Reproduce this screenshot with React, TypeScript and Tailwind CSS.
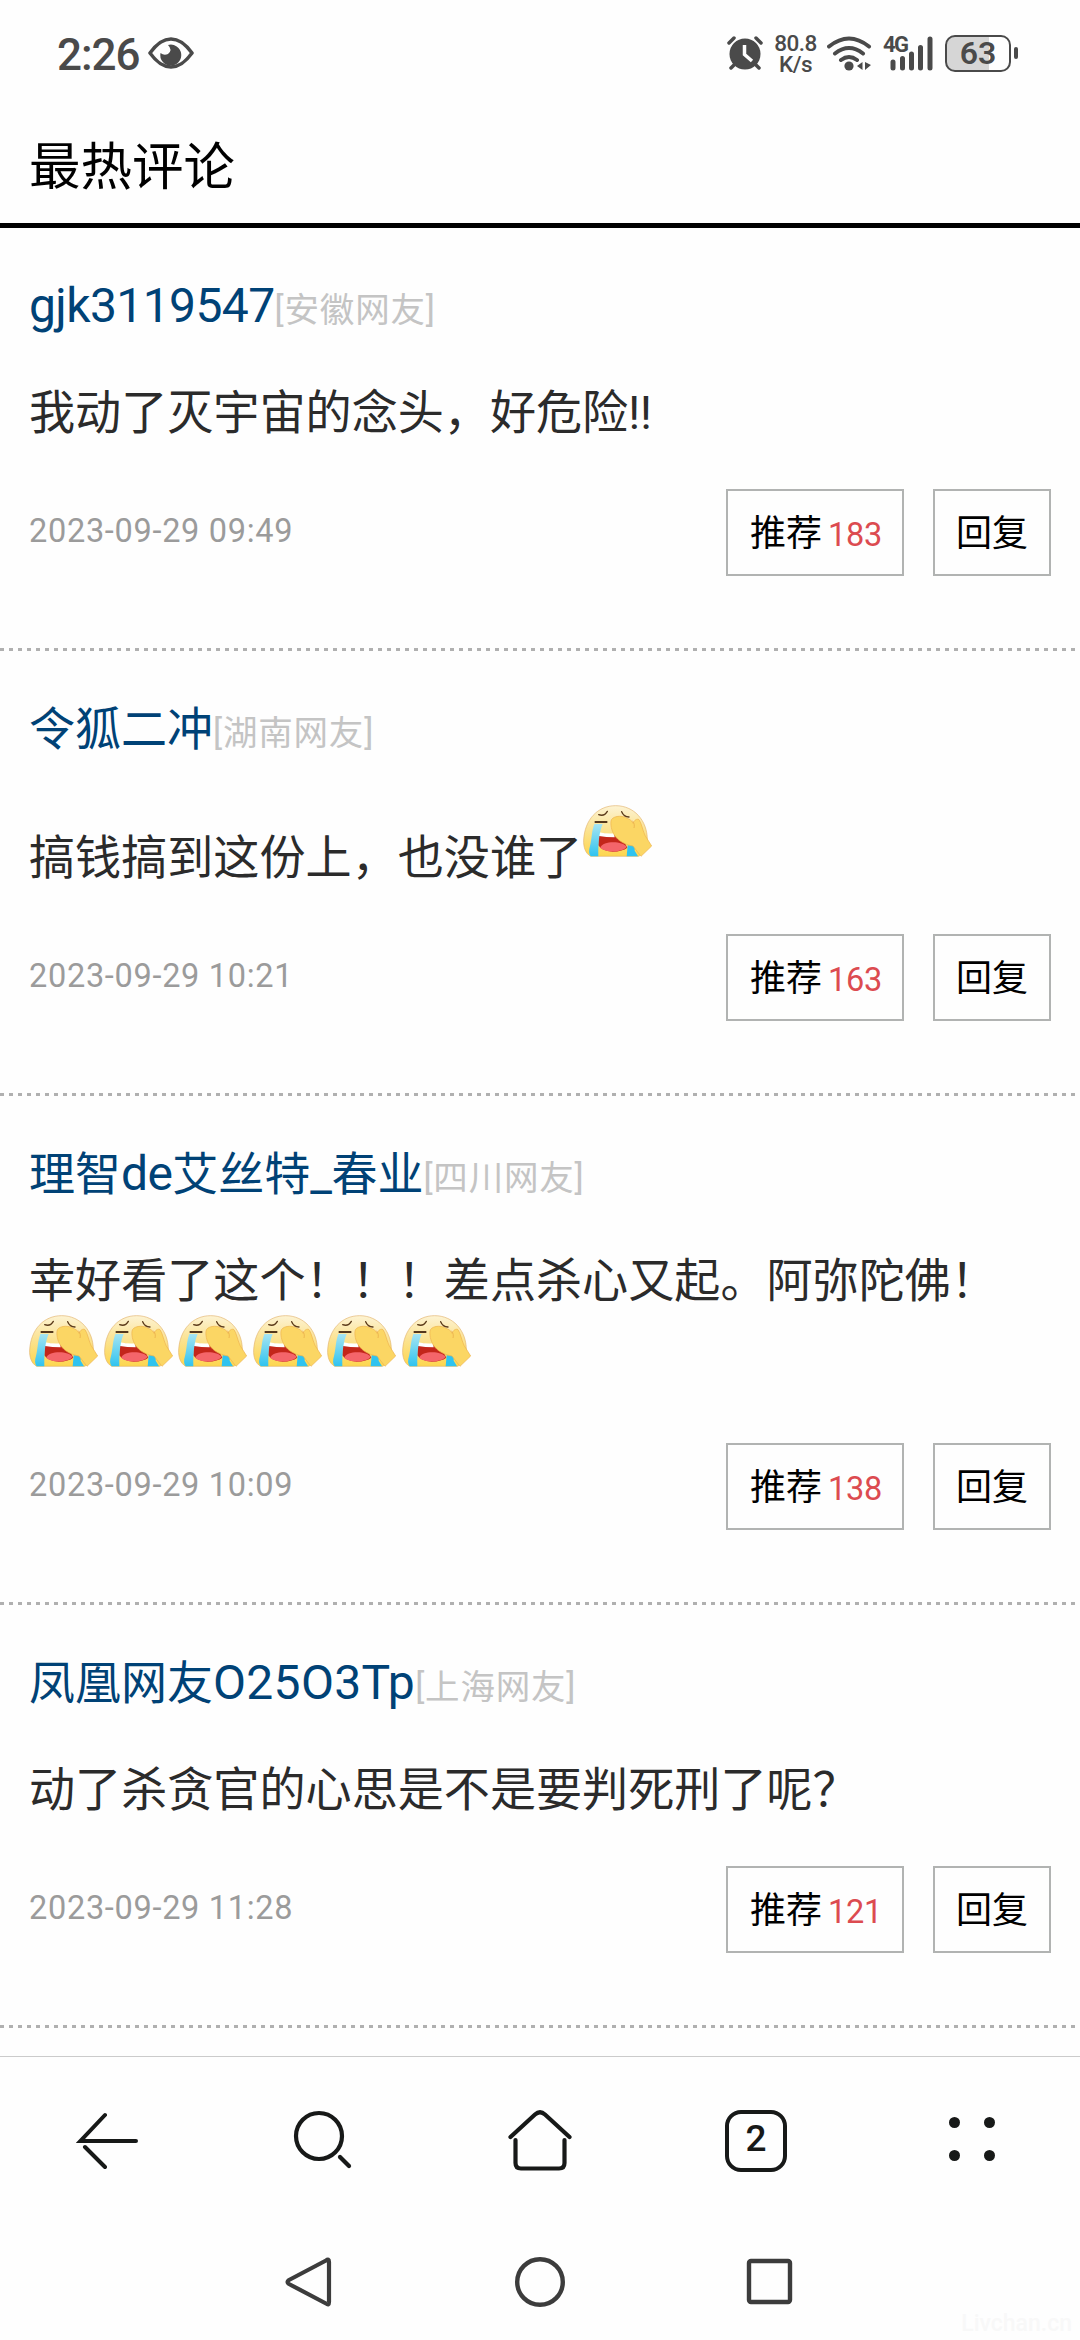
interface Comment {
  name: string
  region: string
  text: string
  time: string
  likes: number
  inlineFaces?: number
  rowFaces?: number
}

const comments: Comment[] = [
  { name: 'gjk3119547', region: '安徽网友', text: '我动了灭宇宙的念头，好危险!!', time: '2023-09-29 09:49', likes: 183 },
  { name: '令狐二冲', region: '湖南网友', text: '搞钱搞到这份上，也没谁了', time: '2023-09-29 10:21', likes: 163, inlineFaces: 1 },
  { name: '理智de艾丝特_春业', region: '四川网友', text: '幸好看了这个！！！差点杀心又起。阿弥陀佛！', time: '2023-09-29 10:09', likes: 138, rowFaces: 6 },
  { name: '凤凰网友O25O3Tp', region: '上海网友', text: '动了杀贪官的心思是不是要判死刑了呢？', time: '2023-09-29 11:28', likes: 121 },
]

function Face() {
  return (
    <svg className="block h-[54px] w-[71px] shrink-0" viewBox="62 74 213 162">
      <defs>
        <linearGradient id="skin" x1="0" y1="0" x2="0" y2="1">
          <stop offset="0" stopColor="#fdf3d3" />
          <stop offset="0.45" stopColor="#fbe394" />
          <stop offset="1" stopColor="#fdd64e" />
        </linearGradient>
        <linearGradient id="tear" x1="0" y1="0" x2="0" y2="1">
          <stop offset="0" stopColor="#a5e4f2" />
          <stop offset="1" stopColor="#2fc3ef" />
        </linearGradient>
      </defs>
      <path d="M88 231C72 222 66 203 67 182C70 122 108 79 163 79C217 79 258 122 258 182C258 204 248 222 232 231Z" fill="url(#skin)" stroke="#e3b36b" strokeWidth="2" />
      <path d="M112 160Q152 168 178 166L198 205Q184 216 154 217Q122 216 111 198Z" fill="#c3261a" />
      <path d="M113 159Q138 164 158 162L160 174Q134 174 113 170Z" fill="#fff" />
      <path d="M117 205C124 184 184 184 196 203C182 220 132 221 117 205Z" fill="#f4656a" />
      <path d="M99 134H124C115 154 110 186 111 231H88C82 224 82 212 86 200C92 178 90 158 99 134Z" fill="url(#tear)" />
      <path d="M199 198H220V214L230 231H196Z" fill="#2fc3ef" />
      <path d="M149 125C151 111 180 106 195 116C204 119 212 124 215 132C219 122 227 117 233 121C241 132 243 151 251 168L271 200L239 231L215 200C198 197 178 190 164 174C153 161 147 142 149 125Z" fill="#fbd664" stroke="#eeb24c" strokeWidth="2" />
      <path d="M213 124C219 131 220 138 218 146" fill="none" stroke="#e5a646" strokeWidth="2" />
      <path d="M112 106Q129 112 138 96M181 97Q187 112 203 113" fill="none" stroke="#5b3a1a" strokeWidth="4" strokeLinecap="round" />
      <path d="M100 128H138" stroke="#54371c" strokeWidth="6" />
    </svg>
  )
}

// latin runs are set a touch larger than the hanzi around them
function UserName({ name }: { name: string }) {
  return (
    <span className="text-[46px] text-[#004276]">
      {name.split(/([A-Za-z0-9_]+)/).map((part, i) =>
        i % 2 ? (
          <span
            key={i}
            className={/[A-Z]/.test(part) ? 'text-[48px] leading-none tracking-[0.3px]' : 'text-[48px] leading-none tracking-[-0.6px]'}
          >
            {part}
          </span>
        ) : (
          part
        ),
      )}
    </span>
  )
}

function CommentItem({ item }: { item: Comment }) {
  return (
    <article>
      <div className="px-[29px] pt-[47px]">
        <div className="flex h-[62px] items-baseline whitespace-nowrap leading-[62px]">
          <UserName name={item.name} />
          <span className="text-[34.5px] tracking-[0.8px] text-[#c4c4c4]">[{item.region}]</span>
        </div>
        <div className={item.inlineFaces ? 'mt-[44px] flex h-[84px] items-end' : 'mt-[46px] flex h-[60px] items-end'}>
          <p className="whitespace-nowrap text-[46.1px] leading-[60px] text-[#2b2b2b]">{item.text}</p>
          {item.inlineFaces && (
            <div className="self-start">
              <Face />
            </div>
          )}
        </div>
        {item.rowFaces && (
          <div className="-ml-[1px] mt-[3px] flex h-[83px] gap-[3.6px]">
            {Array.from({ length: item.rowFaces }, (_, i) => (
              <Face key={i} />
            ))}
          </div>
        )}
        <div className="mt-[46px] flex h-[87px] items-center">
          <time className="flex-1 pb-[3px] text-[32.5px] leading-[40px] tracking-[0.7px] text-[#9b9b9b]">{item.time}</time>
          <button className="flex h-full w-[178px] items-center justify-center border-2 border-[#b1b3b2] pl-[2px] pt-[3px] text-[36px] text-black">
            <span>推荐</span>
            <span className="ml-[6px] mt-[2px] text-[32.5px] tracking-[-0.3px] text-[#dc4b50]">{item.likes}</span>
          </button>
          <button className="ml-[29px] flex h-full w-[118px] items-center justify-center border-2 border-[#b1b3b2] pt-[3px] text-[36px] text-black">
            回复
          </button>
        </div>
      </div>
      <div className="mt-[72px] h-[3px] bg-[repeating-linear-gradient(90deg,#b0b0b0_0_4px,transparent_4px_9px)]" />
    </article>
  )
}

function StatusBar() {
  return (
    <header className="flex h-[108px] items-center pl-[57px] pr-[62px] text-[#4a4a4a]">
      <span className="w-[85px] whitespace-nowrap pt-[2px] text-[44px] font-medium leading-[44px] tracking-[-1px]">2:26</span>
      <svg className="mb-[2px] ml-[6px] h-[32px] w-[46px]" viewBox="0 0 46 32">
        <path d="M2 16C10 5 16 2 23 2S36 5 44 16C36 27 30 30 23 30S10 27 2 16Z" fill="none" stroke="currentColor" strokeWidth="3.6" strokeLinejoin="round" />
        <path d="M20 8A10.5 10.5 0 1 1 12.500 16Q16 19 20 17Q25 13 20 8Z" fill="currentColor" />
      </svg>
      <div className="mb-[2px] ml-auto flex items-center">
        <svg className="h-[34px] w-[36px]" viewBox="0 0 36 34">
          <circle cx="18" cy="18" r="15.500" fill="currentColor" />
          <path d="M2 7L7 2M34 7L29 2M4 32L8 28M32 32L28 28" stroke="currentColor" strokeWidth="3.500" strokeLinecap="round" />
          <path d="M17.500 9V18.500L25 25" fill="none" stroke="#fefefe" strokeWidth="3.500" />
        </svg>
        <div className="ml-[11px] mt-[2px] w-[43px] text-center text-[22.500px] font-medium leading-[21px] tracking-[-0.5px]">
          <div>80.8</div>
          <div>K/s</div>
        </div>
        <svg className="ml-[10px] h-[35px] w-[45px]" viewBox="0 0 45 35">
          <path d="M2 10.500Q22 -5.500 42 10.500M8 17.500Q22 6.500 36 17.500M14 24Q22 18 30 24" fill="none" stroke="currentColor" strokeWidth="4" strokeLinecap="round" />
          <circle cx="22" cy="30" r="4.600" fill="currentColor" />
          <path d="M35.500 26V34L30 30ZM38 26V34L44 29Z" fill="currentColor" />
        </svg>
        <div className="relative ml-[11px] h-[35px] w-[51px]">
          <span className="absolute left-0 top-0 text-[22px] font-bold leading-[18px] tracking-[-1.500px]">4G</span>
          <svg className="h-full w-full" viewBox="0 0 51 35">
            <path d="M10 26V32M19.500 22.500V32M28.500 18V32M37.500 11.500V32M47 3V32" stroke="currentColor" strokeWidth="5" strokeLinecap="round" />
          </svg>
        </div>
        <div className="ml-[11px] flex h-[37px] w-[66px] items-center justify-center rounded-[10px] border-[2.500px] border-[#4a4a4a] bg-[linear-gradient(90deg,#d6d6d6_68%,transparent_68%)] text-[32px] font-semibold leading-none">
          63
        </div>
        <div className="ml-[3px] h-[12px] w-[4px] rounded-full bg-[#4a4a4a]" />
      </div>
    </header>
  )
}

function Toolbar() {
  return (
    <nav className="grid h-[168px] grid-cols-5 items-center justify-items-center border-t border-[#cbcbcb] text-[#171918]">
      <svg className="h-[64px] w-[64px]" viewBox="0 0 64 64" fill="none" stroke="currentColor" strokeWidth="4" strokeLinecap="round">
        <path d="M29 6L4.500 32H60M29 58L9 38" />
      </svg>
      <svg className="h-[64px] w-[64px]" viewBox="0 0 64 64" fill="none" stroke="currentColor" strokeWidth="4.200" strokeLinecap="round">
        <circle cx="27" cy="27" r="23" />
        <path d="M48 48L57 57" />
      </svg>
      <svg className="h-[64px] w-[64px]" viewBox="0 0 64 64" fill="none" stroke="currentColor" strokeWidth="4.200" strokeLinecap="round">
        <path d="M2.500 28L27 5.500Q32 1 37 5.500L61.500 28" />
        <path d="M7.500 31V54Q7.500 59.500 13 59.500H51Q56.500 59.500 56.500 54V31" />
      </svg>
      <div className="flex h-[62px] w-[62px] items-center justify-center rounded-[16px] border-4 border-[#171918] pb-[4px] text-[37px] font-medium leading-none">
        2
      </div>
      <div className="mb-[4px] grid grid-cols-2 gap-x-[24px] gap-y-[22px]">
        {[0, 1, 2, 3].map((i) => (
          <div key={i} className="h-[11px] w-[11px] rounded-full bg-[#171918]" />
        ))}
      </div>
    </nav>
  )
}

function SystemNav() {
  return (
    <footer className="relative flex h-[116px] items-center justify-center gap-[179px] text-[#3c3c3c]">
      <svg className="h-[52px] w-[52px]" viewBox="0 0 52 52" fill="none" stroke="currentColor" strokeWidth="4.200" strokeLinejoin="round">
        <path d="M43 4.500Q46 2 46 6V46Q46 50 43 47.500L6 28Q3 26 6 24Z" />
      </svg>
      <svg className="h-[52px] w-[52px]" viewBox="0 0 52 52" fill="none" stroke="currentColor" strokeWidth="4.400">
        <circle cx="26" cy="26" r="22.800" />
      </svg>
      <svg className="h-[52px] w-[52px]" viewBox="0 0 52 52" fill="none" stroke="currentColor" strokeWidth="4.400">
        <rect x="4" y="5" width="41" height="41" rx="2" />
      </svg>
      <span className="absolute bottom-[3px] right-[8px] text-[23px] font-medium leading-[26px] text-[#f8f8f8]">Livchan.cn</span>
    </footer>
  )
}

export default function App() {
  return (
    <div className="flex h-[2340px] w-[1080px] flex-col overflow-hidden bg-[#fefefe] font-[Roboto,'Noto_Sans_CJK_SC',sans-serif]">
      <StatusBar />
      <h1 className="h-[120px] border-b-[5px] border-black pl-[29px] text-[51.500px] leading-[120px] text-black">最热评论</h1>
      <main className="flex-1 overflow-hidden">
        {comments.map((item) => (
          <CommentItem key={item.time} item={item} />
        ))}
      </main>
      <Toolbar />
      <SystemNav />
    </div>
  )
}
